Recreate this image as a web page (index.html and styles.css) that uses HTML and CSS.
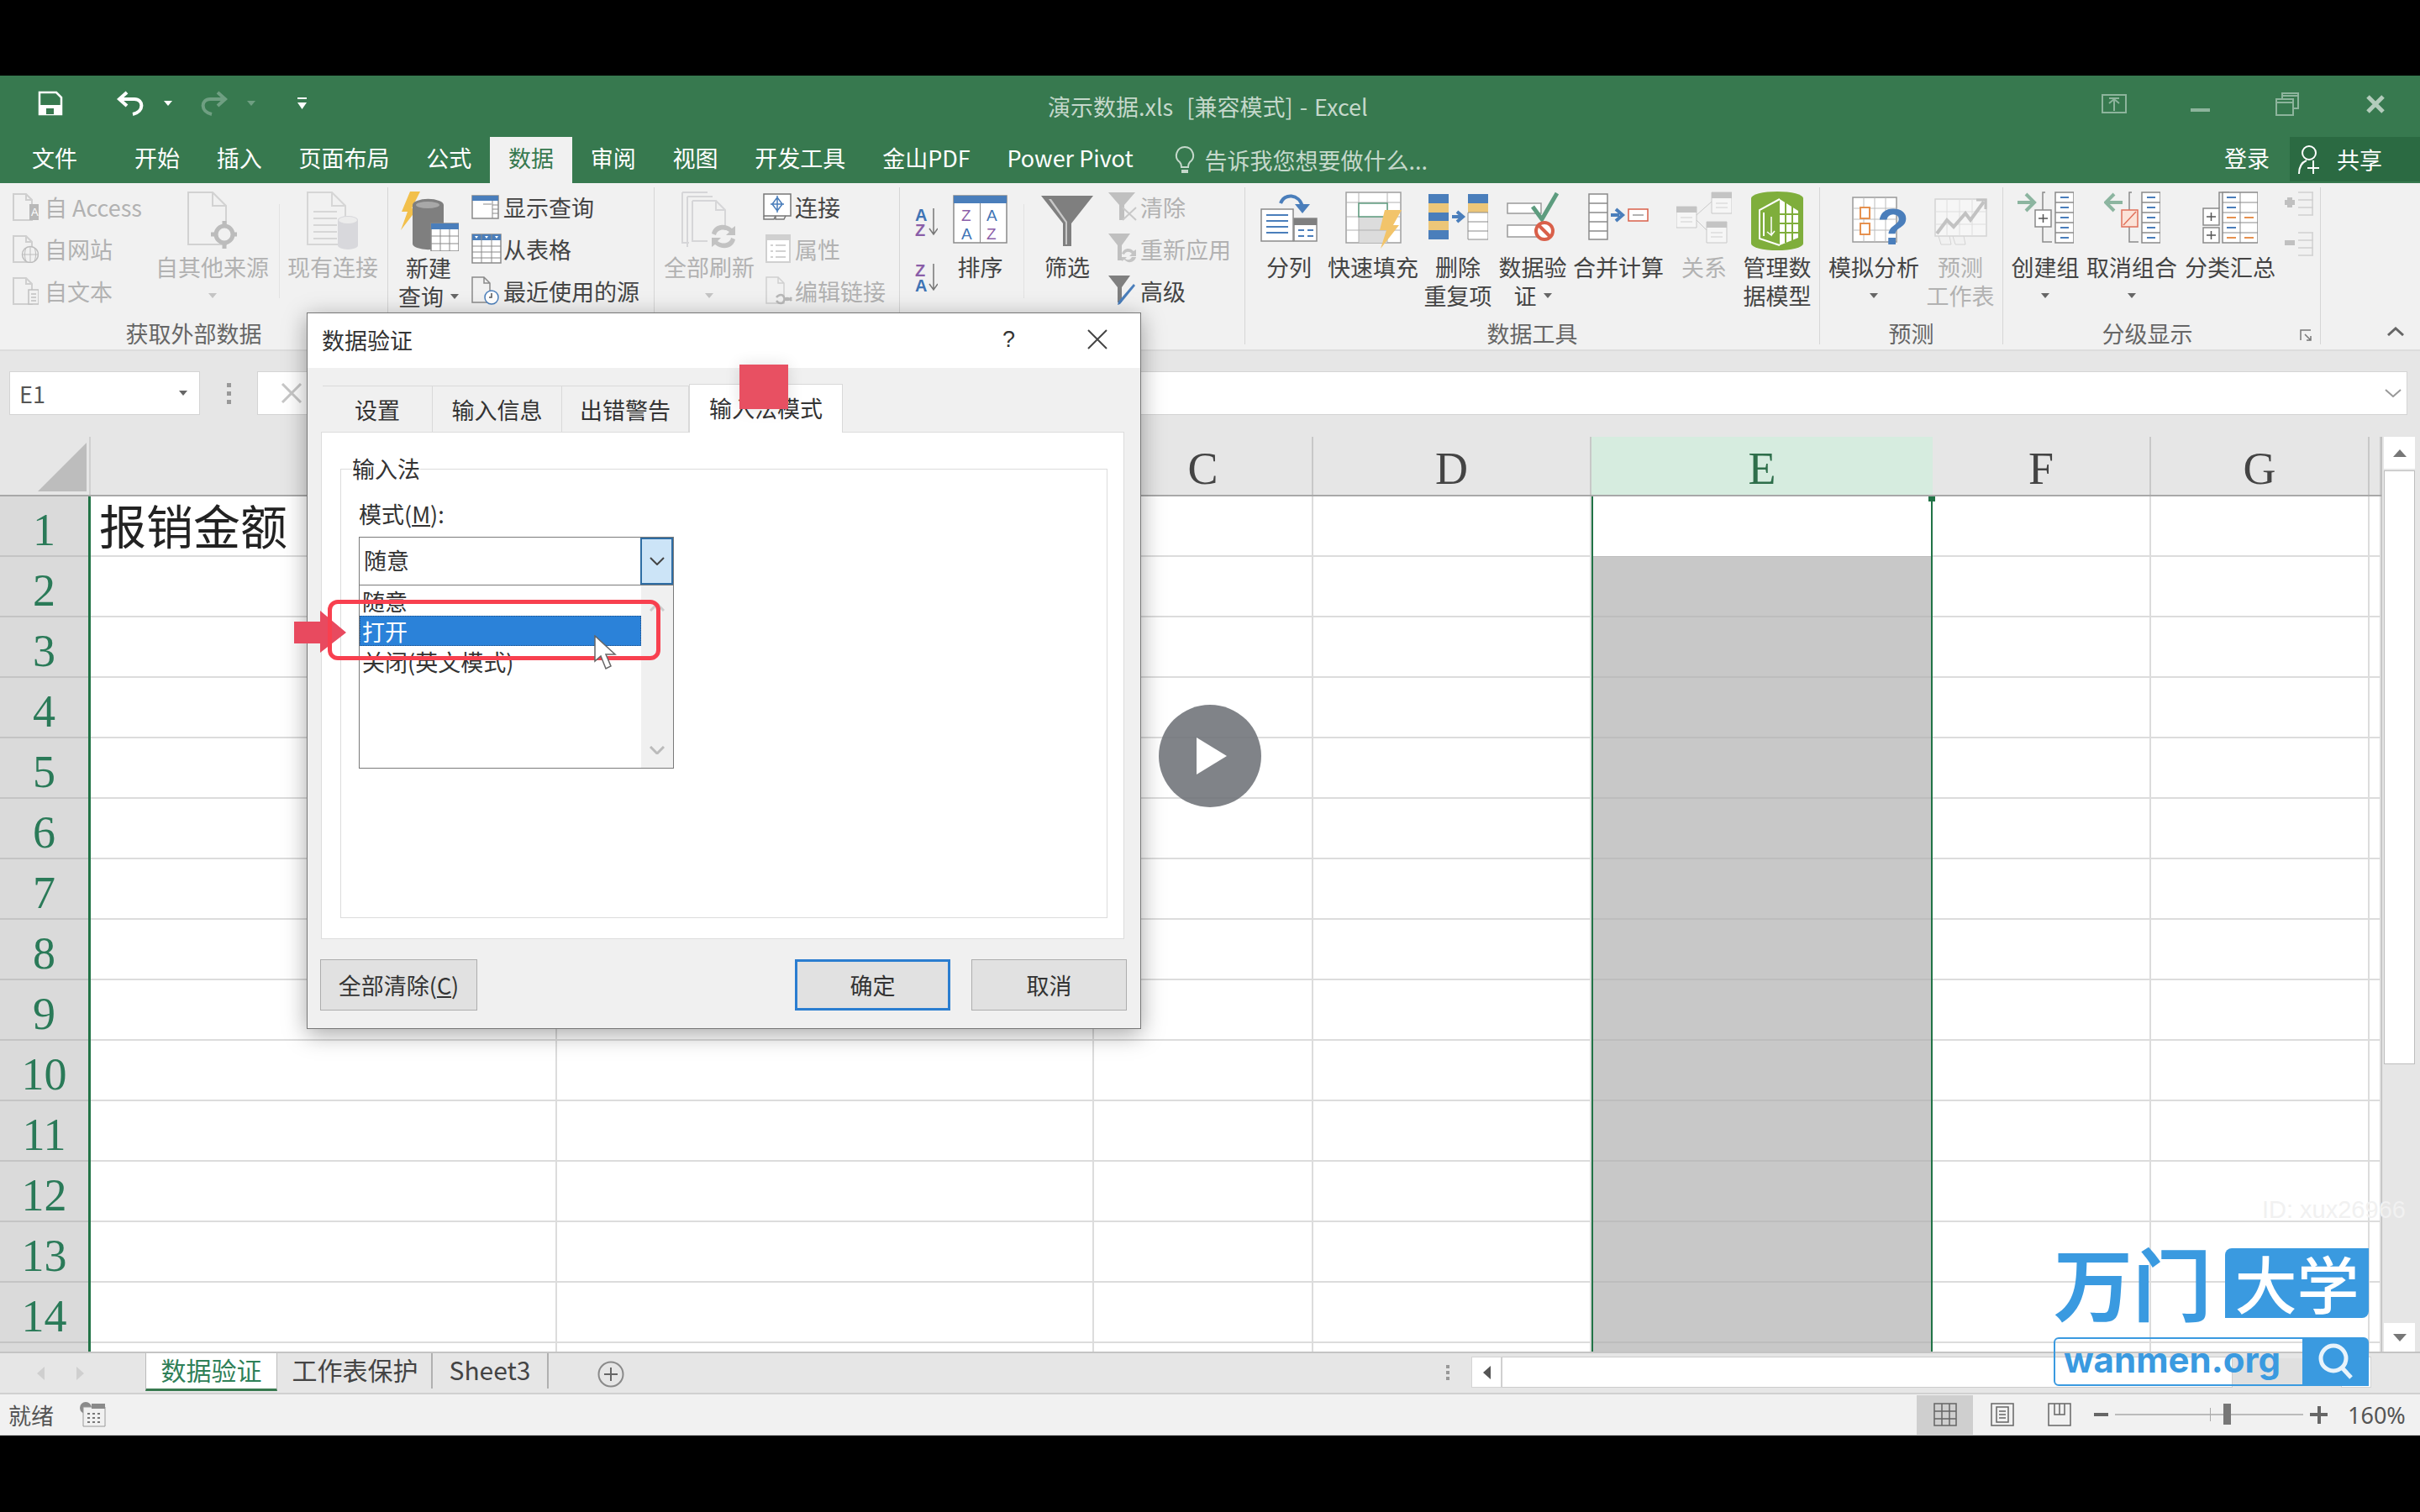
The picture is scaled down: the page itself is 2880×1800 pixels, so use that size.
FILE: index.html
```html
<!DOCTYPE html>
<html lang="zh-CN">
<head>
    <meta charset="UTF-8">
    <title>演示数据.xls [兼容模式] - Excel</title>
    <link rel="stylesheet" href="styles.css">
</head>
<body>
<div class="app">

    <!-- title bar -->
    <header class="titlebar">
        <div class="qat">
            <svg class="q-save" width="30" height="30" viewBox="0 0 30 30"><path d="M2 2h20l6 6v20H2z" fill="none" stroke="#fff" stroke-width="2.5"/><path d="M2 17h26v11H2z" fill="#fff"/><path d="M10 28v-7h9v7" fill="#37794f"/></svg>
            <svg class="q-undo" width="33" height="30" viewBox="0 0 33 30"><path d="M12 2L3 10l9 8M3 10h18c11 0 12 15-2 18" fill="none" stroke="#fff" stroke-width="4"/></svg>
            <i class="q-caret"></i>
            <svg class="q-redo" width="33" height="30" viewBox="0 0 33 30"><path d="M21 2l9 8-9 8M30 10H12C1 10 0 25 14 28" fill="none" stroke="#6f9f82" stroke-width="4"/></svg>
            <i class="q-caret off"></i>
            <svg class="q-more" width="11" height="16" viewBox="0 0 11 16"><path d="M0 1h11v2H0zM0 7h11l-5.500 8z" fill="#fff"/></svg>
        </div>
        <div class="doc-title">演示数据.xls&nbsp; [兼容模式] - Excel</div>
        <div class="win-btns">
            <svg width="30" height="23" viewBox="0 0 30 23"><path d="M1 1h28v21H1zM15 20V7M9 11l6-5 6 5M9 5h12" fill="none" stroke="#8db49c" stroke-width="2"/></svg>
            <svg class="w-min" width="23" height="4" viewBox="0 0 23 4"><path d="M0 0h23v4H0z" fill="#8db49c"/></svg>
            <svg class="w-max" width="28" height="28" viewBox="0 0 28 28"><path d="M8 7V1h19v18h-6M1 8h20v19H1zM1 12h20M8 4h19" fill="none" stroke="#8db49c" stroke-width="2"/></svg>
            <svg class="w-close" width="22" height="22" viewBox="0 0 22 22"><path d="M2 2l18 18M20 2L2 20" stroke="#b3ccbc" stroke-width="5"/></svg>
        </div>
    </header>

    <!-- ribbon tabs -->
    <nav class="tabstrip">
        <span class="rt first">文件</span>
        <span class="rt">开始</span>
        <span class="rt">插入</span>
        <span class="rt">页面布局</span>
        <span class="rt">公式</span>
        <span class="rt active">数据</span>
        <span class="rt">审阅</span>
        <span class="rt">视图</span>
        <span class="rt">开发工具</span>
        <span class="rt">金山PDF</span>
        <span class="rt">Power Pivot</span>
        <span class="tell">
            <svg width="24" height="36" viewBox="0 0 24 36"><path d="M12 2a10 10 0 0 0-6 18c2 2 2 4 2 6h8c0-2 0-4 2-6a10 10 0 0 0-6-18z" fill="none" stroke="#c5d8cb" stroke-width="2"/><path d="M8 29h8v4H8z" fill="#c5d8cb"/></svg>
            告诉我您想要做什么...
        </span>
        <span class="login">登录</span>
        <span class="share">
            <svg width="26" height="36" viewBox="0 0 26 36"><circle cx="13" cy="10" r="8" fill="none" stroke="#fff" stroke-width="2"/><path d="M1 35c0-9 4-14 9-16M18 19v16M11 28h14" fill="none" stroke="#fff" stroke-width="2"/></svg>
            共享
        </span>
    </nav>

    <!-- ribbon -->
    <section class="ribbon">

        <div class="group g-ext">
            <div class="group-body">
                <div class="small-col c-ext">
                    <div class="small off"><span class="s-ico"><svg width="31" height="33" viewBox="0 0 31 33"><path d="M1 1h15l7 7v24H1zM16 1v7h7" fill="none" stroke="#cfcfcf" stroke-width="2"/><path d="M20 13h11v19H20z" fill="#b8b8b8"/><text x="22" y="27" font-size="13" fill="#fff" font-family="Liberation Sans">A</text></svg></span>自 Access</div>
                    <div class="small off"><span class="s-ico"><svg width="31" height="33" viewBox="0 0 31 33"><path d="M1 1h15l7 7v24H1zM16 1v7h7" fill="none" stroke="#cfcfcf" stroke-width="2"/><circle cx="21" cy="23" r="9.500" fill="#f1f1f1" stroke="#bdbdbd" stroke-width="1.500"/><path d="M12 23h18M21 14v18M16 15c-2 5-2 11 0 16M26 15c2 5 2 11 0 16" fill="none" stroke="#bdbdbd"/></svg></span>自网站</div>
                    <div class="small off"><span class="s-ico"><svg width="31" height="33" viewBox="0 0 31 33"><path d="M1 1h15l7 7v24H1zM16 1v7h7" fill="none" stroke="#cfcfcf" stroke-width="2"/><path d="M19 15h12v17H19z" fill="#f1f1f1" stroke="#c0c0c0" stroke-width="1.500"/><path d="M22 20h6M22 24h6M22 28h6" stroke="#c0c0c0" stroke-width="1.500"/></svg></span>自文本</div>
                </div>
                <div class="big off w135">
                    <svg class="ib" width="60" height="70" viewBox="0 0 60 70"><path d="M1 1h29l16 16v46H1zM30 1v16h16" fill="none" stroke="#d2d2d2" stroke-width="2"/><circle cx="44" cy="51" r="10" fill="#f1f1f1" stroke="#bcbcbc" stroke-width="5"/><path d="M44 35v7M44 60v8M28 51h7M53 51h6" stroke="#bcbcbc" stroke-width="5"/></svg>
                    <div class="cap">自其他来源</div>
                    <div class="cap"><i class="caret"></i></div>
                </div>
                <div class="vsep s-ext"></div>
                <div class="big off w108">
                    <svg class="ib" width="62" height="70" viewBox="0 0 62 70"><path d="M1 1h29l16 16v46H1zM30 1v16h16" fill="none" stroke="#d6d6d6" stroke-width="2"/><path d="M8 24h28M8 32h28M8 40h28M8 48h28M8 56h28" stroke="#d6d6d6" stroke-width="2"/><path d="M37 34a12 5 0 0 1 24 0v30a12 5 0 0 1-24 0z" fill="#d8d8dc"/><ellipse cx="49" cy="34" rx="11" ry="4" fill="#ececec"/></svg>
                    <div class="cap">现有连接</div>
                </div>
            </div>
            <div class="group-label">获取外部数据</div>
        </div>

        <div class="group g-query">
            <div class="group-body">
                <div class="big w76">
                    <svg class="ib" width="71" height="71" viewBox="0 0 71 71"><path d="M13 0h12L15 20h7L2 46l8-22H3z" fill="#f2c04c"/><path d="M16 16a18 7 0 0 1 37 0v46a18 7 0 0 1-37 0z" fill="#7f7f7f"/><ellipse cx="34" cy="16" rx="14" ry="4" fill="#a8a8a8"/><path d="M38 38h33v33H38z" fill="#fff" stroke="#8a8a8a" stroke-width="1.500"/><path d="M38 38h33v7H38z" fill="#4a7ebb"/><path d="M38 53h33M38 62h33M49 45v26M60 45v26" stroke="#8a8a8a"/></svg>
                    <div class="cap">新建</div>
                    <div class="cap">查询<i class="caret side"></i></div>
                </div>
                <div class="small-col c-query">
                    <div class="small"><span class="s-ico"><svg width="33" height="29" viewBox="0 0 33 29"><path d="M1 1h31v27H1z" fill="#fff" stroke="#8a8a8a" stroke-width="1.500"/><path d="M1 1h31v6H1z" fill="#4a7ebb"/><path d="M25 7v21M25 12h7M25 17h7M25 22h7M14 11h10" stroke="#8a8a8a"/></svg></span>显示查询</div>
                    <div class="small"><span class="s-ico"><svg width="36" height="36" viewBox="0 0 36 36"><path d="M1 1h34v34H1z" fill="#fff" stroke="#8a8a8a" stroke-width="1.500"/><path d="M1 1h34v7H1z" fill="#4a7ebb"/><path d="M1 15h34M1 22h34M1 29h34M12 1v34M24 1v34" stroke="#8a8a8a"/><path d="M4 3h4l-2 3zM16 3h4l-2 3zM28 3h4l-2 3z" fill="#fff"/></svg></span>从表格</div>
                    <div class="small"><span class="s-ico"><svg width="33" height="34" viewBox="0 0 33 34"><path d="M1 1h14l7 7v23H1zM15 1v7h7" fill="none" stroke="#8a8a8a" stroke-width="1.500"/><circle cx="24" cy="25" r="8" fill="#fff" stroke="#4a7ebb" stroke-width="1.500"/><path d="M24 20v5h-3" fill="none" stroke="#555" stroke-width="1.500"/></svg></span>最近使用的源</div>
                </div>
            </div>
            <div class="group-label"></div>
        </div>

        <div class="group g-conn">
            <div class="group-body">
                <div class="big off w108">
                    <svg class="ib" width="66" height="70" viewBox="0 0 66 70"><path d="M1 1h30M1 1v60h8M7 6h30M7 6v60M13 11h28l11 11v24M13 11v48h18M41 11v11h11" fill="none" stroke="#d6d6d8" stroke-width="2"/><path d="M36 50c2-10 14-14 24-6l4-3v11H53l4-4c-7-5-15-2-16 4zM64 57c-2 10-14 14-24 6l-4 3V55h11l-4 4c7 5 15 2 16-4z" fill="#c2c2c2"/></svg>
                    <div class="cap">全部刷新</div>
                    <div class="cap"><i class="caret"></i></div>
                </div>
                <div class="small-col c-conn">
                    <div class="small"><span class="s-ico"><svg width="34" height="32" viewBox="0 0 34 32"><path d="M1 1h32v26H1z" fill="#fff" stroke="#777" stroke-width="1.500"/><path d="M17 5l6 8-6 8-6-8zM17 3v20M9 13h16" fill="none" stroke="#4a7ebb" stroke-width="1.500"/><path d="M1 27v4h12l2-4M15 27v4h10l2-4" fill="none" stroke="#777" stroke-width="1.500"/></svg></span>连接</div>
                    <div class="small off"><span class="s-ico"><svg class="pad" width="30" height="34" viewBox="0 0 30 34"><path d="M1 1h28v32H1z" fill="#fff" stroke="#d0d0d0" stroke-width="2"/><path d="M1 1h28v6H1z" fill="#d0d0d0"/><path d="M6 13h3M12 13h12M6 20h3M12 20h12M6 27h3M12 27h12" stroke="#c4c4c4" stroke-width="1.500"/></svg></span>属性</div>
                    <div class="small off"><span class="s-ico"><svg class="pad" width="33" height="34" viewBox="0 0 33 34"><path d="M1 1h14l7 7v24H1zM15 1v7h7" fill="none" stroke="#d0d0d0" stroke-width="1.500"/><path d="M13 25c3-4 8-4 9 0s6 4 9 0M13 29c3 4 8 4 9 0s6-4 9 0" fill="none" stroke="#b8b8b8" stroke-width="2.500"/></svg></span>编辑链接</div>
                </div>
            </div>
            <div class="group-label"></div>
        </div>

        <div class="group g-sort">
            <div class="group-body">
                <div class="az-col">
                    <svg width="27" height="44" viewBox="0 -4 27 44"><text x="0" y="16" class="az" fill="#3f74b5">A</text><text x="0" y="34" class="az" fill="#8a5ea8">Z</text><path d="M22 1v30M17 25l5 7 5-7" fill="none" stroke="#777" stroke-width="1.500"/></svg>
                    <svg width="27" height="44" viewBox="0 -4 27 44"><text x="0" y="16" class="az" fill="#8a5ea8">Z</text><text x="0" y="34" class="az" fill="#3f74b5">A</text><path d="M22 1v30M17 25l5 7 5-7" fill="none" stroke="#777" stroke-width="1.500"/></svg>
                </div>
                <div class="big w65">
                    <svg class="ib" width="65" height="70" viewBox="0 0 65 70"><path d="M1 5h63v56H1z" fill="#fff" stroke="#8a8a8a" stroke-width="1.500"/><path d="M1 5h63v9H1z" fill="#4a7ebb"/><path d="M32.500 14v47" stroke="#8a8a8a"/><text x="10" y="35" class="sort-l" fill="#8a5ea8">Z</text><text x="40" y="35" class="sort-l" fill="#3f74b5">A</text><text x="10" y="57" class="sort-l" fill="#3f74b5">A</text><text x="40" y="57" class="sort-l" fill="#8a5ea8">Z</text></svg>
                    <div class="cap">排序</div>
                </div>
                <div class="vsep s-sort"></div>
                <div class="big w62">
                    <svg class="ib" width="62" height="70" viewBox="0 0 62 70"><path d="M0 5h62L36 38v27H26V38z" fill="#7f7f7f"/><path d="M9 9h3l19 27v27h-2V37z" fill="#c8c8c8"/></svg>
                    <div class="cap">筛选</div>
                </div>
                <div class="small-col c-filter">
                    <div class="small off"><span class="s-ico"><svg width="34" height="34" viewBox="0 0 34 34"><path d="M0 0h32L19 15v18h-6V15z" fill="#c0c0c0"/><path d="M17 18l16 15M33 18L17 33" stroke="#c8c8c8" stroke-width="2"/></svg></span>清除</div>
                    <div class="small off"><span class="s-ico"><svg width="34" height="36" viewBox="0 0 34 36"><path d="M0 0h26L16 14v18h-5V14z" fill="#c0c0c0"/><path d="M16 24c2-7 10-8 14-3l3-2v8h-8l3-3c-3-3-7-3-9 1zM33 28c-2 7-10 8-14 3l-3 2v-5h6l-2 2c3 2 6 2 8-2z" fill="#c4c4c4"/></svg></span>重新应用</div>
                    <div class="small"><span class="s-ico"><svg width="34" height="36" viewBox="0 0 34 36"><path d="M0 0h26L16 14v18h-5V14z" fill="#7f7f7f"/><path d="M32 12L14 34l-3 1 1-4L30 10z" fill="#4a7ebb"/></svg></span>高级</div>
                </div>
            </div>
            <div class="group-label"></div>
        </div>

        <div class="group g-tools">
            <div class="group-body">
                <div class="big w76">
                    <svg class="ib" width="68" height="70" viewBox="0 0 68 70"><path d="M1 21h38v38H1z" fill="#fff" stroke="#8a8a8a" stroke-width="1.500"/><path d="M7 28h26M7 35h26M7 42h26M7 49h26" stroke="#4a7ebb" stroke-width="2"/><path d="M40 32h27v27H40z" fill="#fff" stroke="#8a8a8a" stroke-width="1.500"/><path d="M40 32h27v8H40z" fill="#7f7f7f"/><path d="M45 46h7M56 46h7M45 53h7M56 53h7" stroke="#4a7ebb" stroke-width="2"/><path d="M24 14C28 2 46 2 50 18" fill="none" stroke="#4a7ebb" stroke-width="4"/><path d="M41 15h18l-9 11z" fill="#4a7ebb"/></svg>
                    <div class="cap">分列</div>
                </div>
                <div class="big w108">
                    <svg class="ib" width="67" height="70" viewBox="0 0 67 70"><path d="M1 1h65v60H1z" fill="#fff" stroke="#a0a0a0" stroke-width="1.500"/><path d="M16 30h34v31H16z" fill="#dcdcdc"/><path d="M1 13h65M1 30h65M1 46h65M16 1v60M50 1v60" stroke="#b0b0b0"/><path d="M16 14h34v16H16z" fill="#fff" stroke="#5d9c7f" stroke-width="1.500"/><path d="M47 22h20L57 40h7L42 68l7-22h-8z" fill="#f2c46a"/></svg>
                    <div class="cap">快速填充</div>
                </div>
                <div class="big w78">
                    <svg class="ib" width="71" height="70" viewBox="0 0 71 70"><path d="M0 3h24v11H0z" fill="#4a7ebb"/><path d="M0 14h24v11H0z" fill="#ecc678"/><path d="M0 25h24v10H0z" fill="#4a7ebb"/><path d="M0 35h24v11H0z" fill="#ecc678"/><path d="M0 46h24v11H0z" fill="#4a7ebb"/><path d="M47 3h24v11H47z" fill="#4a7ebb"/><path d="M47 14h24v11H47z" fill="#ecc678"/><path d="M47 25h24v32H47z" fill="#fff" stroke="#8a8a8a"/><path d="M47 36h24M47 47h24" stroke="#8a8a8a"/><path d="M28 30h10M34 24l7 6-7 6" fill="none" stroke="#4a7ebb" stroke-width="4"/></svg>
                    <div class="cap">删除</div>
                    <div class="cap">重复项</div>
                </div>
                <div class="big w84">
                    <svg class="ib" width="62" height="70" viewBox="0 0 62 70"><path d="M1 14h40v12H1zM1 40h40v14H1z" fill="#fff" stroke="#9a9a9a" stroke-width="1.500"/><path d="M31 18l11 15L60 2" fill="none" stroke="#5d9c7f" stroke-width="5"/><circle cx="45" cy="47" r="10" fill="#fff" stroke="#d9604a" stroke-width="4"/><path d="M38 40l14 14" stroke="#d9604a" stroke-width="4"/></svg>
                    <div class="cap">数据验</div>
                    <div class="cap">证<i class="caret side"></i></div>
                </div>
                <div class="big w104">
                    <svg class="ib" width="72" height="70" viewBox="0 0 72 70"><path d="M1 3h22v54H1z" fill="#fff" stroke="#8a8a8a" stroke-width="1.500"/><path d="M1 14h22M1 25h22M1 36h22M1 47h22" stroke="#8a8a8a" stroke-width="1.500"/><path d="M27 28h10M33 21l8 7-8 7" fill="none" stroke="#4a7ebb" stroke-width="4"/><path d="M48 21h23v14H48z" fill="#fff" stroke="#d9604a" stroke-width="1.500"/><path d="M53 28h13" stroke="#999" stroke-width="1.500"/></svg>
                    <div class="cap">合并计算</div>
                </div>
                <div class="big off w84">
                    <svg class="ib" width="66" height="70" viewBox="0 0 66 70"><path d="M42 1h24v25H42zM0 18h24v25H0zM36 36h24v25H36z" fill="#f6f6f6" stroke="#c8c8c8"/><path d="M42 1h24v7H42zM0 18h24v7H0zM36 36h24v7H36z" fill="#c4c4c4"/><path d="M24 28l18-16M24 34l12 12" stroke="#c8c8c8"/><path d="M47 14h14M47 19h14M5 31h14M5 36h14M41 49h14M41 54h14" stroke="#d0d0d0"/></svg>
                    <div class="cap">关系</div>
                </div>
                <div class="big w74">
                    <svg class="ib" width="62" height="70" viewBox="0 0 62 70"><path d="M0 8a31 8 0 0 1 62 0v54a31 8 0 0 1-62 0z" fill="#7fae3c"/><path d="M34 9l22 14v32L34 64z" fill="#fff"/><path d="M41 13v48M49 18v40M34 27h22M34 38h22M34 49h22" stroke="#7fae3c" stroke-width="2"/><path d="M34 9L10 22v34l24 8M15 25v28" fill="none" stroke="#fff" stroke-width="2"/><path d="M24 30v22l-5-4M24 52l4-5" fill="none" stroke="#fff" stroke-width="1.500"/></svg>
                    <div class="cap">管理数</div>
                    <div class="cap">据模型</div>
                </div>
            </div>
            <div class="group-label">数据工具</div>
        </div>

        <div class="group g-fore">
            <div class="group-body">
                <div class="big w108">
                    <svg class="ib icon-shift" width="70" height="78" viewBox="0 0 70 78"><path d="M1 7h52v53H1z" fill="#fff" stroke="#999" stroke-width="1.500"/><path d="M14 7v53M27 7v53M40 7v53M1 20h52M1 33h52M1 46h52" stroke="#bbb"/><path d="M10 19h11v13H10zM10 38h11v13H10z" fill="#fff" stroke="#e6914f" stroke-width="2"/><text x="30" y="63" class="qmark">?</text></svg>
                    <div class="cap">模拟分析</div>
                    <div class="cap"><i class="caret dark"></i></div>
                </div>
                <div class="big off w80">
                    <svg class="ib" width="63" height="70" viewBox="0 0 63 70"><path d="M1 9h61v44H1z" fill="#f6f6f6" stroke="#d4d4d4" stroke-width="1.500"/><path d="M15 9v44M30 9v44M45 9v44M1 24h61M1 39h61" stroke="#dedede"/><path d="M3 50l12-16 8 8 14-16 6 8 16-22" fill="none" stroke="#c2c2c2" stroke-width="4"/><path d="M50 10h11v11" fill="none" stroke="#c2c2c2" stroke-width="3"/><path d="M5 53l3 10h12l-2-10M22 53l3 10h12l-2-10" fill="none" stroke="#d4d4d4"/></svg>
                    <div class="cap">预测</div>
                    <div class="cap">工作表</div>
                </div>
            </div>
            <div class="group-label">预测</div>
        </div>

        <div class="group g-outline">
            <div class="group-body">
                <div class="big w80">
                    <svg class="ib" width="67" height="70" viewBox="0 0 67 70"><path d="M0 13h18M10 3l10 10-10 10" fill="none" stroke="#8cb5a0" stroke-width="4"/><path d="M33 1H30v21M30 42v18h11" fill="none" stroke="#8a8a8a" stroke-width="1.500"/><path d="M21 22h19v20H21z" fill="#fff" stroke="#8a8a8a" stroke-width="1.500"/><path d="M25 32h11M30.500 27v10" stroke="#555" stroke-width="1.500"/><path d="M45 1h22v60H45z" fill="#fff" stroke="#8a8a8a" stroke-width="1.500"/><path d="M45 13h22M45 25h22M45 37h22M45 49h22" stroke="#8a8a8a" stroke-width="1.500"/><path d="M51 7h10M51 19h10M51 31h10M51 43h10M51 55h10" stroke="#4a7ebb" stroke-width="2"/></svg>
                    <div class="cap">创建组</div>
                    <div class="cap"><i class="caret dark"></i></div>
                </div>
                <div class="big w108">
                    <svg class="ib" width="67" height="70" viewBox="0 0 67 70"><path d="M22 13H4M12 3L2 13l10 10" fill="none" stroke="#8cb5a0" stroke-width="4"/><path d="M33 1H30v21M30 42v18h11" fill="none" stroke="#8a8a8a" stroke-width="1.500"/><path d="M21 22h19v20H21z" fill="#fbe3d8" stroke="#e0705a" stroke-width="1.500"/><path d="M23 40l15-16" stroke="#e0705a" stroke-width="1.500"/><path d="M45 1h22v60H45z" fill="#fff" stroke="#8a8a8a" stroke-width="1.500"/><path d="M45 13h22M45 25h22M45 37h22M45 49h22" stroke="#8a8a8a" stroke-width="1.500"/><path d="M51 7h10M51 19h10M51 31h10M51 43h10M51 55h10" stroke="#4a7ebb" stroke-width="2"/></svg>
                    <div class="cap">取消组合</div>
                    <div class="cap"><i class="caret dark"></i></div>
                </div>
                <div class="big w108">
                    <svg class="ib" width="66" height="70" viewBox="0 0 66 70"><path d="M20 20V1h12M11 20" fill="none" stroke="#8a8a8a" stroke-width="1.500"/><path d="M1 20h19v20H1zM1 43h19v18H1z" fill="#fff" stroke="#8a8a8a" stroke-width="1.500"/><path d="M5 30h11M10.500 25v10M5 52h11M10.500 47v10" stroke="#555" stroke-width="1.500"/><path d="M24 1h42v60H24z" fill="#fff" stroke="#8a8a8a" stroke-width="1.500"/><path d="M45 1v60M24 13h42M24 25h42M24 37h42M24 49h42" stroke="#8a8a8a"/><path d="M29 7h11M29 19h11M29 43h11" stroke="#4a7ebb" stroke-width="2"/><path d="M29 31h11M50 31h11M29 55h11M50 55h11" stroke="#e6914f" stroke-width="2"/></svg>
                    <div class="cap">分类汇总</div>
                </div>
                <div class="outline-mini">
                    <svg width="34" height="30" viewBox="0 0 34 30"><path d="M0 10h12v6H0zM3 7h6v12H3z" fill="#c0c0c0"/><path d="M16 1h18M16 10h18M16 19h18M16 28h18M33 1v27" stroke="#d0d0d0" stroke-width="1.500"/></svg>
                    <svg width="34" height="30" viewBox="0 0 34 30"><path d="M0 10h12v6H0z" fill="#c0c0c0"/><path d="M16 1h18M16 10h18M16 19h18M16 28h18M33 1v27" stroke="#d0d0d0" stroke-width="1.500"/></svg>
                </div>
            </div>
            <div class="group-label">分级显示</div>
            <svg class="launcher" width="15" height="14" viewBox="0 0 15 14"><path d="M1 13V1h12M6 6l7 7M8 13h5V8" fill="none" stroke="#777" stroke-width="1.500"/></svg>
        </div>

        <svg class="collapse" width="20" height="11" viewBox="0 0 20 11"><path d="M1 10l9-8 9 8" fill="none" stroke="#666" stroke-width="3"/></svg>
    </section>

    <!-- formula bar -->
    <section class="formula">
        <div class="namebox">E1<i class="caret dark"></i></div>
        <div class="fdots"><i></i><i></i><i></i></div>
        <div class="finput">
            <svg width="26" height="24" viewBox="0 0 26 24"><path d="M2 1l22 22M24 1L2 23" stroke="#c6c6c6" stroke-width="3"/></svg>
            <svg class="fchev" width="20" height="10" viewBox="0 0 20 10"><path d="M1 1l9 8 9-8" fill="none" stroke="#999" stroke-width="2"/></svg>
        </div>
    </section>

    <!-- sheet -->
    <section class="sheet">
        <div class="sheet-main">
            <div class="col-heads">
                <div class="corner"><svg width="58" height="58" viewBox="0 0 58 58"><path d="M58 0v58H0z" fill="#bdbdbd"/></svg></div>
                <div class="ch w-a">A</div>
                <div class="ch w-b">B</div>
                <div class="ch w-c">C</div>
                <div class="ch w-d">D</div>
                <div class="ch w-e sel">E</div>
                <div class="ch w-f">F</div>
                <div class="ch w-g">G</div>
                <div class="ch w-h"></div>
            </div>
            <div class="sheet-body">
                <div class="row-heads">
                    <div>1</div><div>2</div><div>3</div><div>4</div><div>5</div>
                    <div>6</div><div>7</div><div>8</div><div>9</div><div>10</div>
                    <div>11</div><div>12</div><div>13</div><div>14</div>
                </div>
                <div class="col w-a"><div class="a1">报销金额</div></div>
                <div class="col w-b"></div>
                <div class="col w-c"></div>
                <div class="col w-d"></div>
                <div class="col w-e col-sel"><div class="e1"><i class="handle"></i></div></div>
                <div class="col w-f"></div>
                <div class="col w-g"></div>
                <div class="col w-h"></div>
            </div>
        </div>
        <div class="vscroll">
            <div class="vbtn"><i class="tri up"></i></div>
            <div class="vthumb"></div>
            <div class="vbtn down"><i class="tri dn"></i></div>
        </div>
    </section>

    <!-- sheet tabs -->
    <section class="sheetbar">
        <div class="nav"><i class="nl"></i><i class="nr"></i></div>
        <div class="stab active">数据验证</div>
        <div class="stab s2">工作表保护</div>
        <div class="stab s3">Sheet3</div>
        <svg class="addsheet" width="32" height="32" viewBox="0 0 32 32"><circle cx="16" cy="16" r="14.500" fill="none" stroke="#8a8a8a" stroke-width="2"/><path d="M8 16h16M16 8v16" stroke="#666" stroke-width="2"/></svg>
        <div class="hscroll">
            <div class="hdots"><i></i><i></i><i></i></div>
            <div class="hbtn"><i class="nl dark"></i></div>
            <div class="htrack"></div>
            <div class="hthumb"></div>
            <div class="hbtn"><i class="nr dark"></i></div>
        </div>
    </section>

    <!-- status bar -->
    <footer class="status">
        <span class="ready">就绪</span>
        <svg width="31" height="30" viewBox="0 0 31 30"><circle cx="7" cy="7" r="7" fill="#8a8a8a"/><path d="M4 6h26v23H4z" fill="#f1f1f1" stroke="#9a9a9a"/><path d="M14 2h16v6H14z" fill="#8a8a8a"/><path d="M9 14h3M15 14h3M21 14h3M9 19h3M15 19h3M21 19h3M9 24h3M15 24h3M21 24h3" stroke="#777" stroke-width="2"/></svg>
        <div class="views">
            <div class="view on"><svg width="28" height="28" viewBox="0 0 28 28"><path d="M1 1h26v26H1zM10 1v26M19 1v26M1 10h26M1 19h26" fill="none" stroke="#666" stroke-width="1.500"/></svg></div>
            <div class="view"><svg width="28" height="28" viewBox="0 0 28 28"><path d="M1 1h26v26H1zM7 5h14v18H7zM10 10h8M10 14h8M10 18h8" fill="none" stroke="#666" stroke-width="1.500"/></svg></div>
            <div class="view"><svg width="28" height="28" viewBox="0 0 28 28"><path d="M1 1h26v26H1zM8 1v13h12V1M14 1v13" fill="none" stroke="#666" stroke-width="1.500"/></svg></div>
        </div>
        <div class="zoomer">
            <i class="z-minus"></i>
            <div class="z-track"><i class="z-tick"></i><i class="z-thumb"></i></div>
            <i class="z-plus"></i>
            <span class="z-val">160%</span>
        </div>
    </footer>
</div>

<!-- dialog -->
<div class="dialog">
    <div class="dlg-title">
        <span>数据验证</span>
        <span class="dlg-help">?</span>
        <svg class="dlg-x" width="24" height="24" viewBox="0 0 24 24"><path d="M1 1l22 22M23 1L1 23" stroke="#444" stroke-width="2"/></svg>
    </div>
    <div class="dlg-tabs">
        <div class="dtab t1">设置</div>
        <div class="dtab t2">输入信息</div>
        <div class="dtab t3">出错警告</div>
        <div class="dtab t4 active">输入法模式</div>
    </div>
    <div class="dlg-panel">
        <fieldset class="ime">
            <legend>输入法</legend>
            <div class="mode-label">模式(<u>M</u>):</div>
            <div class="combo">
                <span class="combo-val">随意</span>
                <div class="combo-btn"><svg width="18" height="10" viewBox="0 0 18 10"><path d="M1 1l8 8 8-8" fill="none" stroke="#444" stroke-width="2"/></svg></div>
            </div>
            <div class="droplist">
                <div class="items">
                    <div class="item">随意</div>
                    <div class="item picked">打开</div>
                    <div class="item">关闭(英文模式)</div>
                </div>
                <div class="list-scroll">
                    <svg width="18" height="10" viewBox="0 0 18 10"><path d="M1 9l8-8 8 8" fill="none" stroke="#ccc" stroke-width="3"/></svg>
                    <svg width="18" height="10" viewBox="0 0 18 10"><path d="M1 1l8 8 8-8" fill="none" stroke="#bbb" stroke-width="3"/></svg>
                </div>
            </div>
        </fieldset>
    </div>
    <div class="dlg-foot">
        <button class="btn clear">全部清除(<u>C</u>)</button>
        <button class="btn ok">确定</button>
        <button class="btn cancel">取消</button>
    </div>
</div>

<!-- video annotations -->
<div class="note-square"></div>
<svg class="note-arrow" width="62" height="50" viewBox="0 0 62 50"><path d="M0 13h31V0l31 26-31 24V39H0z" fill="#e84a5f"/></svg>
<div class="note-rect"></div>
<svg class="cursor" width="28" height="42" viewBox="0 0 28 42"><path d="M1 1v30l7-6 6 15 6-3-6-14h11z" fill="#fff" stroke="#666" stroke-width="1.500"/></svg>
<div class="play"><svg width="40" height="44" viewBox="0 0 40 44"><path d="M2 0l36 22L2 44z" fill="#fff"/></svg></div>

<div class="watermark">ID: xux26966</div>
<div class="logo">
    <div class="logo-top">
        <span class="logo-name">万门</span>
        <span class="logo-badge">大学</span>
    </div>
    <div class="logo-url">
        <span class="logo-site">wanmen.org</span>
        <span class="logo-search"><svg width="44" height="48" viewBox="0 0 44 48"><circle cx="20" cy="20" r="15" fill="none" stroke="#e8f3fb" stroke-width="5"/><path d="M30 31l11 12" stroke="#e8f3fb" stroke-width="5"/></svg></span>
    </div>
</div>
</body>
</html>
```

FILE: styles.css
```css
* {
    box-sizing: border-box;
}
body {
    margin: 0;
    width: 2880px;
    height: 1800px;
    position: relative;
    overflow: hidden;
    background-color: #000;
    font-family: "Noto Sans CJK SC", "Noto Sans", sans-serif;
    font-size: 27px;
    color: #444;
}
i {
    display: block;
}
svg {
    display: block;
    flex: none;
}
.app {
    position: absolute;
    top: 90px;
    left: 0;
    width: 2880px;
    height: 1619px;
    display: flex;
    flex-direction: column;
    background-color: #f1f1f1;
}

/* title bar */
.titlebar {
    height: 73px;
    background-color: #37794f;
    position: relative;
    display: flex;
    align-items: center;
}
.qat {
    display: flex;
    align-items: center;
    padding-left: 45px;
    margin-top: -7px;
}
.q-undo {
    margin-left: 64px;
}
.q-caret {
    width: 0;
    height: 0;
    margin-left: 23px;
    border-left: 5px solid transparent;
    border-right: 5px solid transparent;
    border-top: 6px solid #fff;
}
.q-caret.off {
    border-top-color: #6f9f82;
}
.q-redo {
    margin-left: 33px;
}
.q-more {
    margin-left: 50px;
}
.doc-title {
    position: absolute;
    left: 1247px;
    top: 18px;
    line-height: 38px;
    color: #c5d8cb;
    white-space: nowrap;
    word-spacing: 2px;
}
.win-btns {
    margin-left: auto;
    display: flex;
    align-items: center;
    margin-top: -6px;
    padding-right: 42px;
}
.w-min {
    margin-left: 76px;
    margin-top: 14px;
}
.w-max {
    margin-left: 78px;
}
.w-close {
    margin-left: 80px;
}

/* ribbon tabs */
.tabstrip {
    height: 55px;
    background-color: #37794f;
    display: flex;
    color: #fff;
    line-height: 50px;
}
.rt {
    padding: 0 21.9px;
    white-space: nowrap;
}
.rt.first {
    padding-left: 38px;
    padding-right: 46px;
}
.rt.active {
    background-color: #f1f1f1;
    color: #37794f;
}
.tell {
    display: flex;
    align-items: center;
    gap: 12px;
    margin-left: 27px;
    color: #c5d8cb;
    white-space: nowrap;
}
.login {
    margin-left: auto;
    white-space: nowrap;
    position: relative;
    left: -2px;
}
.share {
    margin-left: 22px;
    width: 155px;
    background-color: #2b6a42;
    display: flex;
    align-items: center;
    gap: 20px;
    padding-left: 10px;
    height: 53px;
}

/* ribbon */
.ribbon {
    height: 200px;
    padding-top: 5px;
    display: flex;
    position: relative;
    border-bottom: 2px solid #dcdcdc;
}
.group {
    height: 187px;
    display: flex;
    flex-direction: column;
    border-right: 1px solid #d6d6d6;
    position: relative;
}
.group-body {
    height: 157px;
    flex: none;
    display: flex;
}
.group-label {
    line-height: 34px;
    flex: none;
    text-align: center;
    color: #666;
}
.g-ext {
    width: 462px;
}
.g-ext .group-body {
    padding-left: 15px;
}
.g-query {
    width: 317px;
}
.g-query .group-body {
    padding-left: 10px;
}
.g-conn {
    width: 292px;
}
.g-conn .group-body {
    padding-left: 11px;
}
.g-sort {
    width: 411px;
}
.g-sort .group-body {
    padding-left: 18px;
}
.g-tools {
    width: 684px;
}
.g-tools .group-body {
    padding-left: 14px;
    gap: 8px;
}
.g-fore {
    width: 218px;
}
.g-fore .group-body {
    padding-left: 10px;
    gap: 9px;
}
.g-outline {
    width: 378px;
}
.g-outline .group-body {
    padding-left: 10px;
    gap: 9px;
}
.g-outline .group-label {
    padding-right: 34px;
}
.big {
    display: flex;
    flex-direction: column;
    align-items: center;
    flex: none;
}
.ib {
    margin-top: 5px;
    margin-bottom: 3px;
}
.icon-shift {
    margin-left: 18px;
    margin-bottom: -5px;
}
.cap {
    line-height: 34px;
    height: 34px;
    white-space: nowrap;
    display: flex;
    align-items: center;
    justify-content: center;
}
.off {
    color: #b2b2b2;
}
.w62 { width: 62px; }
.w65 { width: 65px; }
.w74 { width: 74px; }
.w76 { width: 76px; }
.w78 { width: 78px; }
.w80 { width: 80px; }
.w84 { width: 84px; }
.w104 { width: 104px; }
.w108 { width: 108px; }
.w135 { width: 135px; }
.caret {
    width: 0;
    height: 0;
    border-left: 5px solid transparent;
    border-right: 5px solid transparent;
    border-top: 6px solid #c4c4c4;
}
.caret.dark, .caret.side {
    border-top-color: #666;
}
.caret.side {
    margin-left: 8px;
}
.small-col {
    display: flex;
    flex-direction: column;
    flex: none;
    margin-top: -2px;
}
.small {
    height: 50px;
    display: flex;
    align-items: center;
    white-space: nowrap;
}
.s-ico {
    width: 38px;
    flex: none;
}
.pad {
    margin-left: 3px;
}
.c-ext {
    width: 170px;
}
.c-query {
    margin-left: 13px;
}
.c-conn {
    margin-left: 10px;
}
.c-filter {
    margin-left: 18px;
}
.vsep {
    width: 1px;
    height: 112px;
    margin-top: 20px;
    background-color: #e2e2e2;
    flex: none;
}
.s-ext {
    margin-left: 12px;
    margin-right: 9px;
}
.s-sort {
    margin-left: 19px;
    margin-right: 20px;
}
.az-col {
    width: 27px;
    padding-top: 20px;
    display: flex;
    flex-direction: column;
    gap: 22px;
    margin-right: 18px;
    flex: none;
}
.az {
    font-family: "Liberation Sans", sans-serif;
    font-weight: 700;
    font-size: 20px;
}
.sort-l {
    font-family: "Liberation Sans", sans-serif;
    font-size: 19px;
}
.qmark {
    font-family: "Liberation Sans", sans-serif;
    font-weight: 700;
    font-size: 62px;
    fill: #4a7ebb;
}
.outline-mini {
    display: flex;
    flex-direction: column;
    gap: 18px;
    padding-top: 5px;
    margin-left: 2px;
}
.launcher {
    position: absolute;
    right: 9px;
    bottom: 4px;
}
.collapse {
    position: absolute;
    right: 19px;
    bottom: 16px;
}

/* formula bar */
.formula {
    height: 102px;
    background-color: #e6e6e6;
    padding: 24px 15px 26px 11px;
    display: flex;
}
.namebox {
    width: 227px;
    height: 52px;
    background-color: #fff;
    border: 1px solid #d4d4d4;
    display: flex;
    align-items: center;
    justify-content: space-between;
    padding: 0 14px 0 11px;
    color: #555;
}
.fdots {
    width: 68px;
    display: flex;
    flex-direction: column;
    align-items: center;
    justify-content: center;
    gap: 5px;
}
.fdots i {
    width: 5px;
    height: 5px;
    background-color: #999;
}
.finput {
    flex: 1;
    height: 52px;
    background-color: #fff;
    border: 1px solid #d4d4d4;
    display: flex;
    align-items: center;
    justify-content: space-between;
    padding: 0 6px 0 27px;
}

/* sheet */
.sheet {
    height: 1089px;
    display: flex;
}
.sheet-main {
    width: 2834px;
    display: flex;
    flex-direction: column;
    background-color: #fff;
}
.col-heads {
    height: 71px;
    flex: none;
    display: flex;
    background-color: #e6e6e6;
    border-bottom: 2px solid #a8a8a8;
}
.corner {
    width: 108px;
    padding: 7px 0 0 45px;
    border-right: 2px solid #d0d0d0;
}
.ch {
    font-family: "Liberation Serif", serif;
    font-size: 54px;
    line-height: 76px;
    text-align: center;
    color: #444;
    border-right: 2px solid #c8c8c8;
}
.ch.sel {
    background-color: #d6ecdf;
    color: #2e6e4a;
    border-right: none;
}
.w-a { width: 555px; }
.w-b { width: 639px; }
.w-c { width: 261px; }
.w-d { width: 331px; }
.w-e { width: 406px; }
.w-f { width: 260px; }
.w-g { width: 260px; }
.w-h { width: 14px; }
.sheet-body {
    flex: 1;
    display: flex;
    overflow: hidden;
}
.row-heads {
    width: 108px;
    flex: none;
    background-color: #dadada;
    border-right: 3px solid #217346;
}
.row-heads div {
    height: 72px;
    border-bottom: 2px solid #c4c4c4;
    font-family: "Liberation Serif", serif;
    font-size: 54px;
    line-height: 80px;
    text-align: center;
    color: #2a7a58;
}
.col {
    height: 100%;
    flex: none;
    border-right: 2px solid #dcdcdc;
    background-image: repeating-linear-gradient(to bottom, transparent 0, transparent 70px, #dcdcdc 70px, #dcdcdc 72px);
}
.a1 {
    height: 70px;
    padding-left: 10px;
    font-family: "Liberation Serif", "Noto Sans CJK SC", serif;
    font-size: 56px;
    line-height: 76px;
    color: #222;
    white-space: nowrap;
}
.col-sel {
    background-color: #c8c8c8;
    background-image: repeating-linear-gradient(to bottom, transparent 0, transparent 70px, #bdbdbd 70px, #bdbdbd 72px);
    border-left: 2px solid #217346;
    border-right: 2px solid #217346;
    position: relative;
}
.e1 {
    height: 71px;
    background-color: #fff;
}
.handle {
    position: absolute;
    top: -2px;
    right: -5px;
    width: 8px;
    height: 8px;
    background-color: #217346;
}
.vscroll {
    width: 46px;
    background-color: #e6e6e6;
    padding: 0 6px 0 2px;
    display: flex;
    flex-direction: column;
    border-left: 1px solid #bbb;
}
.vbtn {
    height: 38px;
    background-color: #fff;
    display: flex;
    align-items: center;
    justify-content: center;
}
.vbtn.down {
    margin-top: auto;
    height: 34px;
}
.tri {
    width: 0;
    height: 0;
    border-left: 8px solid transparent;
    border-right: 8px solid transparent;
}
.tri.up {
    border-bottom: 9px solid #777;
}
.tri.dn {
    border-top: 9px solid #777;
}
.vthumb {
    height: 707px;
    margin-top: 2px;
    background-color: #fff;
    border: 1px solid #bdbdbd;
}

/* sheet tabs */
.sheetbar {
    height: 51px;
    display: flex;
    background-color: #e6e6e6;
    border-top: 2px solid #c4c4c4;
    border-bottom: 2px solid #d0d0d0;
    position: relative;
}
.nav {
    width: 173px;
    padding: 16px 0 0 44px;
    display: flex;
    gap: 38px;
}
.nl, .nr {
    width: 0;
    height: 0;
    border-top: 8px solid transparent;
    border-bottom: 8px solid transparent;
}
.nl {
    border-right: 9px solid #cfcfcf;
}
.nr {
    border-left: 9px solid #cfcfcf;
}
.nl.dark {
    border-right-color: #555;
}
.nr.dark {
    border-left-color: #555;
}
.stab {
    font-size: 30px;
    line-height: 38px;
    text-align: center;
    height: 42px;
    white-space: nowrap;
}
.stab.active {
    width: 157px;
    height: 45px;
    background-color: #fff;
    color: #2f8058;
    border-bottom: 3px solid #37794f;
    border-left: 1px solid #bbb;
    border-right: 1px solid #bbb;
}
.s2 {
    width: 185px;
    padding-left: 2px;
    border-right: 2px solid #b0b0b0;
}
.s3 {
    width: 138px;
    border-right: 2px solid #b0b0b0;
}
.addsheet {
    margin: 9px 0 0 58px;
}
.hscroll {
    position: absolute;
    left: 1706px;
    top: 4px;
    width: 1130px;
    height: 37px;
    display: flex;
}
.hdots {
    width: 45px;
    padding-right: 11px;
    display: flex;
    flex-direction: column;
    align-items: center;
    justify-content: center;
    gap: 3px;
}
.hdots i {
    width: 4px;
    height: 4px;
    background-color: #999;
}
.hbtn {
    width: 36px;
    background-color: #fff;
    border: 1px solid #d4d4d4;
    display: flex;
    align-items: center;
    justify-content: center;
}
.htrack {
    width: 870px;
    background-color: #fff;
    border: 1px solid #ccc;
}
.hthumb {
    width: 129px;
    background-color: #e0e0e0;
    margin: 2px 0;
}

/* status bar */
.status {
    height: 49px;
    display: flex;
    align-items: center;
    background-color: #f1f1f1;
    border-bottom: 1px solid #ccc;
}
.ready {
    margin: 0 31px 0 10px;
    color: #555;
}
.views {
    margin-left: auto;
    display: flex;
    align-items: stretch;
    height: 47px;
}
.view {
    width: 67px;
    margin-right: 1px;
    display: flex;
    align-items: center;
    justify-content: center;
}
.view.on {
    background-color: #cfcfcf;
}
.zoomer {
    display: flex;
    align-items: center;
    margin-left: 7px;
    width: 388px;
}
.z-minus {
    width: 17px;
    height: 4px;
    background-color: #666;
    margin-right: 8px;
}
.z-track {
    width: 224px;
    height: 2px;
    background-color: #bbb;
    position: relative;
}
.z-tick {
    position: absolute;
    left: 113px;
    top: -7px;
    width: 1px;
    height: 16px;
    background-color: #aaa;
}
.z-thumb {
    position: absolute;
    left: 129px;
    top: -12px;
    width: 9px;
    height: 25px;
    background-color: #777;
}
.z-plus {
    width: 21px;
    height: 21px;
    margin-left: 8px;
    background-image: linear-gradient(#666, #666), linear-gradient(#666, #666);
    background-size: 21px 4px, 4px 21px;
    background-position: center;
    background-repeat: no-repeat;
}
.z-val {
    margin-left: 24px;
    font-family: "Noto Sans", sans-serif;
    color: #555;
}

/* dialog */
.dialog {
    position: absolute;
    left: 365px;
    top: 372px;
    width: 993px;
    height: 853px;
    display: flex;
    flex-direction: column;
    background-color: #f0f0f0;
    border: 1px solid #777;
    box-shadow: 0 6px 26px rgba(0, 0, 0, .35);
}
.dlg-title {
    height: 65px;
    background-color: #fff;
    display: flex;
    align-items: center;
    padding: 0 0 3px 17px;
    color: #333;
}
.dlg-help {
    margin-left: auto;
    font-family: "Liberation Sans", sans-serif;
}
.dlg-x {
    margin: 0 39px 0 86px;
}
.dlg-tabs {
    margin-top: 19px;
    padding-left: 18px;
    height: 57px;
    display: flex;
    align-items: flex-end;
}
.dtab {
    height: 55px;
    line-height: 56px;
    text-align: center;
    color: #333;
    background-color: #f0f0f0;
    border-top: 1px solid #d9d9d9;
    border-right: 1px solid #d9d9d9;
}
.t1 { width: 131px; }
.t2 { width: 154px; }
.t3 { width: 151px; }
.dtab.t4 {
    width: 183px;
    height: 58px;
    background-color: #fff;
    margin-bottom: -1px;
    position: relative;
    border-left: 1px solid #d9d9d9;
}
.dlg-panel {
    margin: 0 19px 0 16px;
    height: 604px;
    background-color: #fff;
    border: 1px solid #dcdcdc;
    padding: 26px 19px 0 22px;
}
.ime {
    margin: 0;
    padding: 0 0 0 21px;
    height: 552px;
    border: 1px solid #dcdcdc;
}
.ime legend {
    padding: 0;
    margin-left: -8px;
    line-height: 34px;
    color: #333;
}
.mode-label {
    margin-top: 21px;
    line-height: 32px;
    color: #333;
}
.combo {
    margin-top: 11px;
    width: 375px;
    height: 58px;
    display: flex;
    border: 1px solid #7a7a7a;
    background-color: #fff;
}
.combo-val {
    flex: 1;
    padding-left: 5px;
    line-height: 54px;
    color: #333;
}
.combo-btn {
    width: 39px;
    background-color: #cce4f7;
    border: 2px solid #2e6da4;
    display: flex;
    align-items: center;
    justify-content: center;
}
.droplist {
    width: 375px;
    height: 218px;
    display: flex;
    border: 1px solid #7a7a7a;
    border-top: none;
    background-color: #fff;
}
.items {
    width: 335px;
}
.item {
    height: 36px;
    line-height: 37px;
    padding-left: 3px;
    color: #333;
    white-space: nowrap;
}
.item.picked {
    background-color: #2b82d9;
    color: #fff;
    outline: 1px dotted #1c4f87;
    outline-offset: -1px;
}
.list-scroll {
    flex: 1;
    background-color: #f0f0f0;
    display: flex;
    flex-direction: column;
    align-items: center;
    justify-content: space-between;
    padding: 21px 0 16px;
}
.dlg-foot {
    margin-top: 24px;
    padding: 0 16px 0 15px;
    display: flex;
}
.btn {
    height: 61px;
    padding: 0;
    background-color: #e1e1e1;
    border: 1px solid #adadad;
    font-family: inherit;
    font-size: 27px;
    color: #333;
}
.clear {
    width: 187px;
}
.ok {
    width: 185px;
    margin-left: auto;
    border: 3px solid #2a7dd0;
}
.cancel {
    width: 185px;
    margin-left: 25px;
}

/* video annotations */
.note-square {
    position: absolute;
    left: 880px;
    top: 434px;
    width: 58px;
    height: 53px;
    background-color: #e85062;
    box-shadow: 0 0 18px rgba(0, 0, 0, .12);
}
.note-arrow {
    position: absolute;
    left: 350px;
    top: 727px;
}
.note-rect {
    position: absolute;
    left: 390px;
    top: 714px;
    width: 396px;
    height: 72px;
    border: 5px solid #f8404f;
    border-radius: 12px;
}
.cursor {
    position: absolute;
    left: 707px;
    top: 756px;
}
.play {
    position: absolute;
    left: 1379px;
    top: 839px;
    width: 122px;
    height: 122px;
    border-radius: 50%;
    background-color: rgba(110, 114, 120, .88);
    display: flex;
    align-items: center;
    justify-content: center;
    padding-left: 4px;
}
.watermark {
    position: absolute;
    left: 2692px;
    top: 1418px;
    font-family: "Liberation Sans", sans-serif;
    font-size: 29px;
    line-height: 44px;
    color: #f1f1f1;
    white-space: nowrap;
}
.logo {
    position: absolute;
    left: 2444px;
    top: 1486px;
    width: 375px;
    display: flex;
    flex-direction: column;
    gap: 23px;
}
.logo-top {
    height: 83px;
    display: flex;
    justify-content: space-between;
}
.logo-name {
    font-size: 94px;
    line-height: 78px;
    font-weight: 700;
    color: #3a9ae0;
    white-space: nowrap;
}
.logo-badge {
    width: 171px;
    height: 83px;
    background-color: #3a9ae0;
    border-radius: 8px 0 8px 0;
    color: #fff;
    font-size: 74px;
    line-height: 80px;
    font-weight: 500;
    text-align: center;
    white-space: nowrap;
}
.logo-url {
    height: 58px;
    display: flex;
    border: 2px solid #3a9ae0;
    border-radius: 6px 6px 0 6px;
}
.logo-site {
    width: 294px;
    padding-left: 10px;
    font-family: Inter, "Liberation Sans", sans-serif;
    font-weight: 700;
    font-size: 42px;
    line-height: 50px;
    color: #3a9ae0;
    white-space: nowrap;
}
.logo-search {
    flex: 1;
    background-color: #3a9ae0;
    display: flex;
    align-items: center;
    justify-content: center;
}
```
